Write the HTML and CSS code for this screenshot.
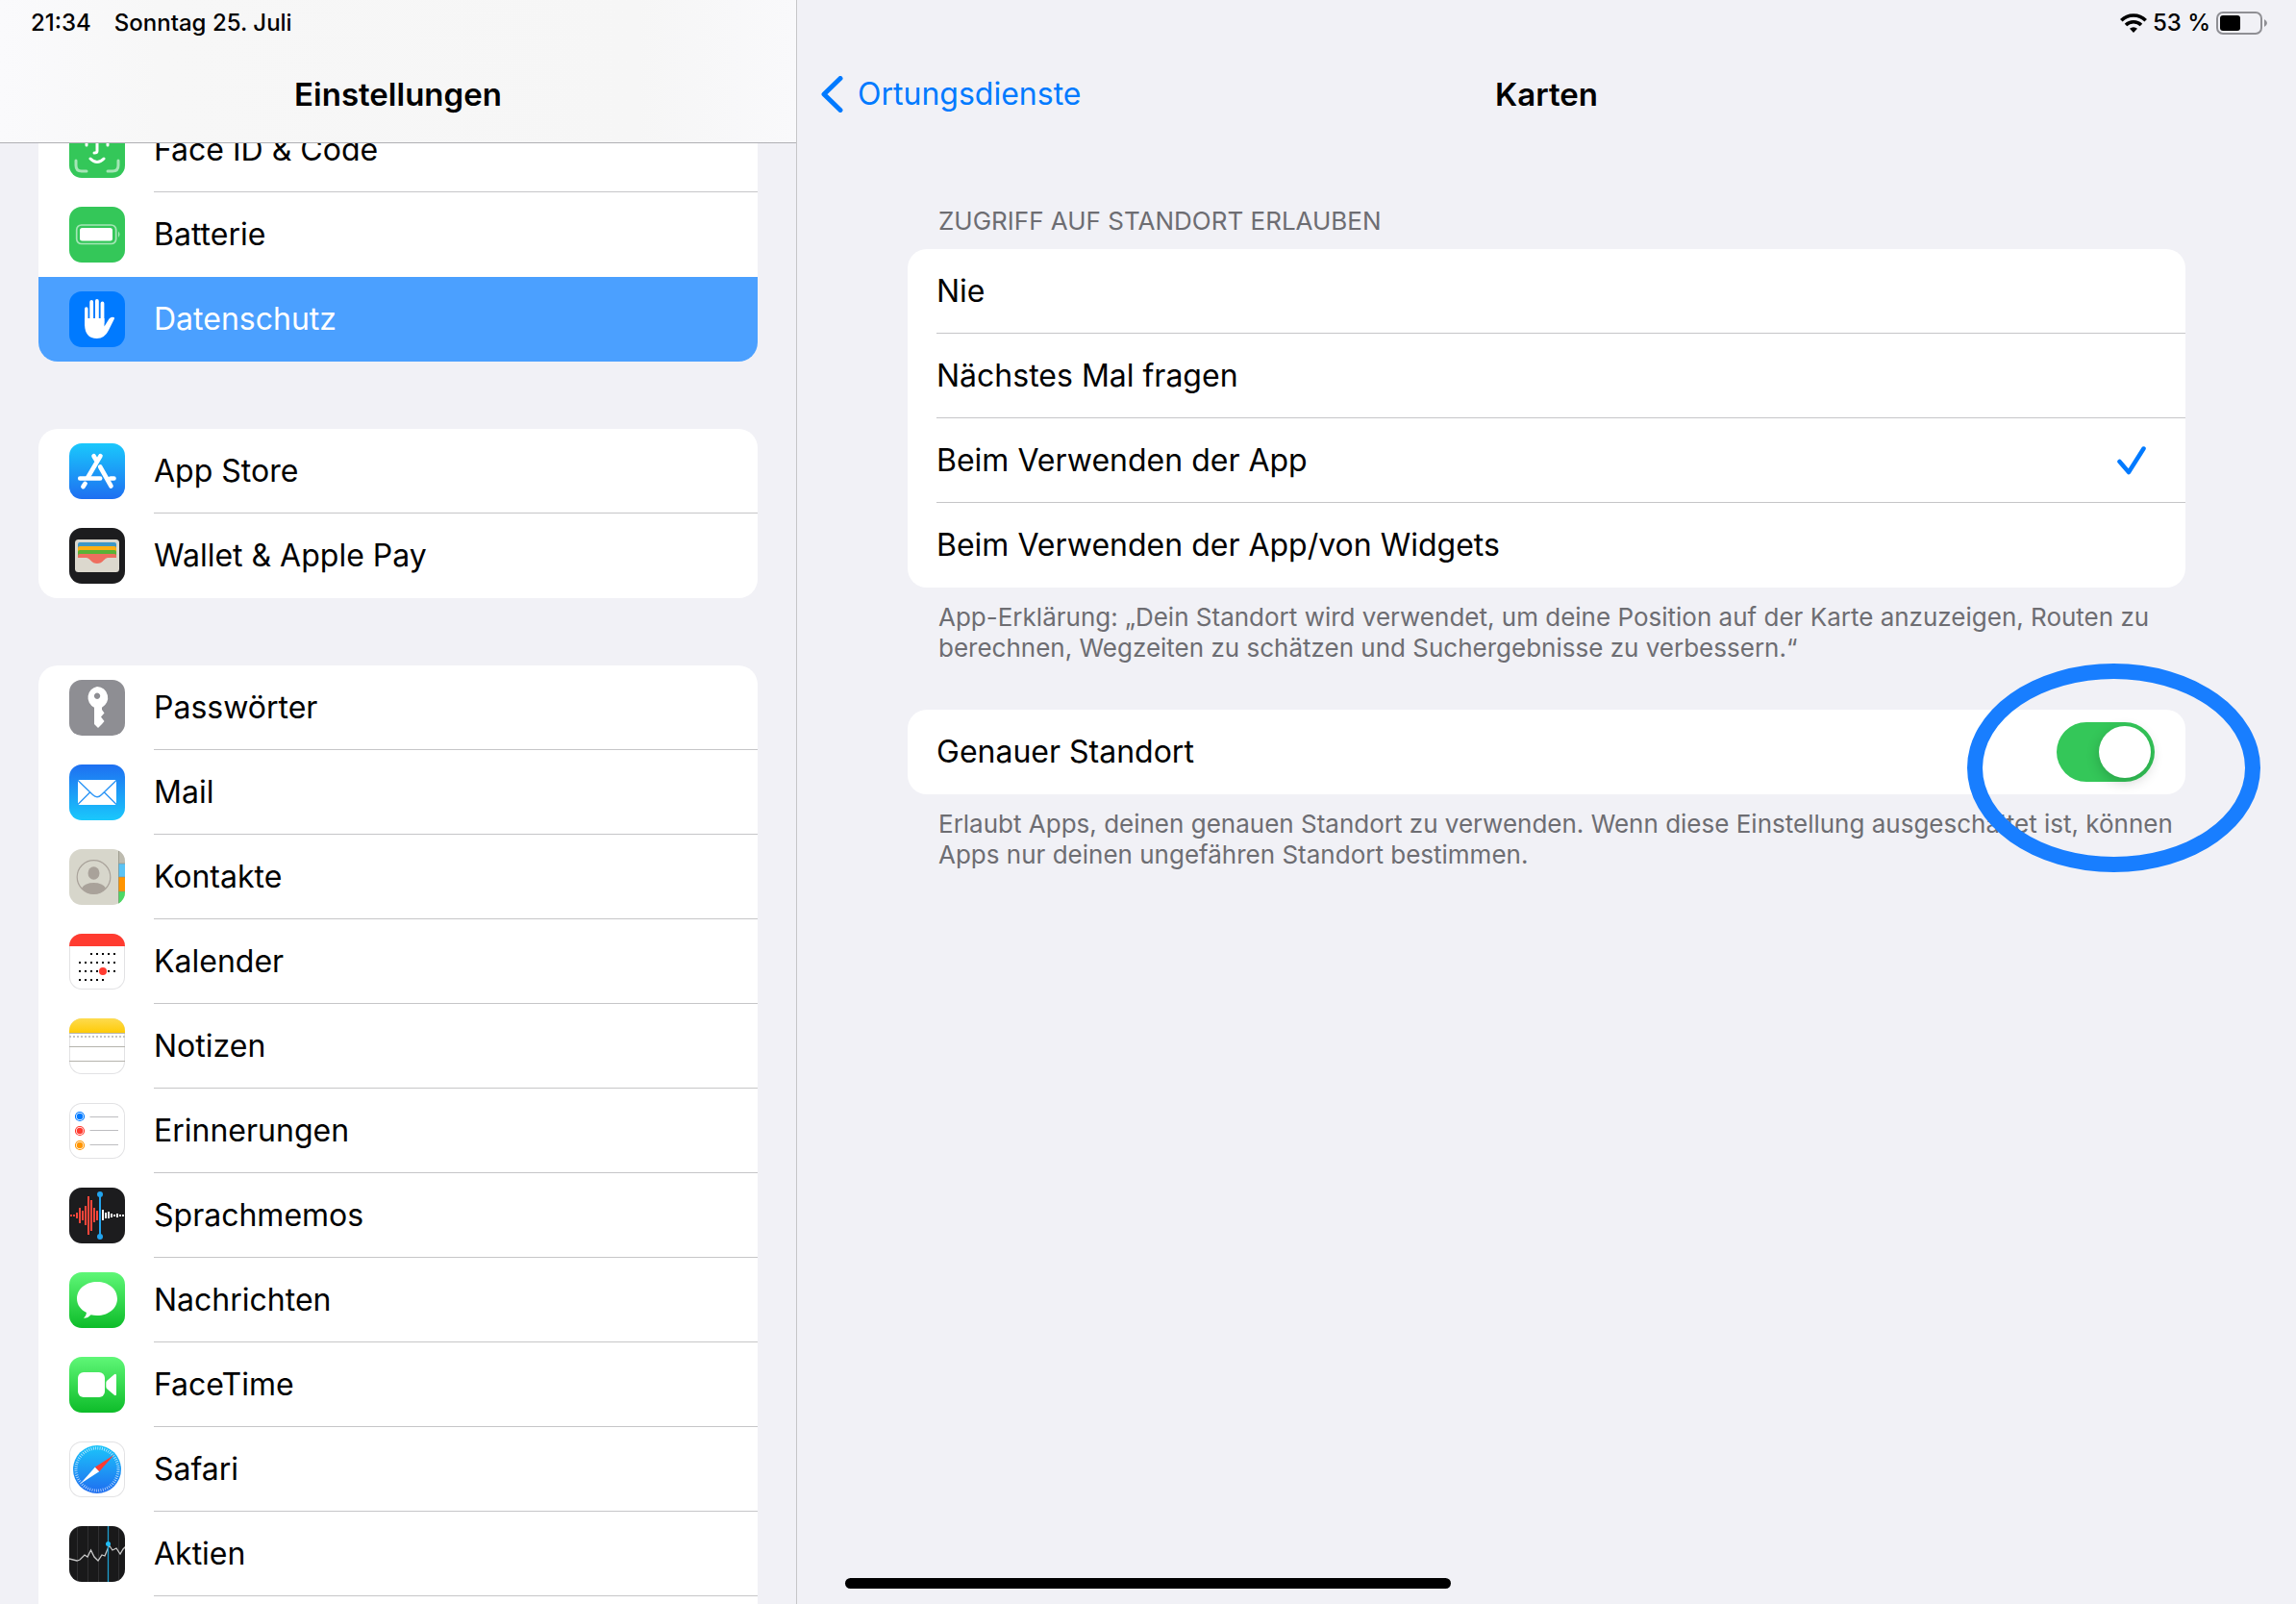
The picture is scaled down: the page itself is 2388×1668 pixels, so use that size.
FILE: index.html
```html
<!DOCTYPE html>
<html lang="de">
<head>
    <meta charset="UTF-8">
    <meta name="viewport" content="width=device-width, initial-scale=1">
    <title>Einstellungen</title>
    <link rel="stylesheet" href="styles.css">
</head>
<body>
    <div class="settings">
        <aside class="sidebar">
            <header class="sidebar-header">
                <div class="status">
                    <span>21:34</span>
                    <span>Sonntag 25. Juli</span>
                </div>
                <div class="navbar">
                    <h1 class="navbar-title">Einstellungen</h1>
                </div>
            </header>
            <nav class="menu">
                <ul class="menu-group menu-group-scrolled">
                    <li>
                        <a class="menu-item" href="#">
                            <svg class="icon" viewBox="0 0 58 58">
                                <rect width="58" height="58" fill="#34c759"/>
                                <g fill="none" stroke="#fff" stroke-width="3" stroke-linecap="round">
                                    <path d="M18 19v5M40 19v5M29 19v11q0 2-3 2M22 38q7 7 14 0"/>
                                    <path stroke="#a5e6b6" d="M7 40v5q0 6 6 6h5M51 40v5q0 6-6 6h-5M7 18v-5q0-6 6-6h5M51 18v-5q0-6-6-6h-5"/>
                                </g>
                            </svg>
                            <span class="menu-text">Face ID &amp; Code</span>
                        </a>
                    </li>
                    <li>
                        <a class="menu-item" href="#">
                            <svg class="icon" viewBox="0 0 58 58">
                                <rect width="58" height="58" fill="#34c759"/>
                                <rect x="7.700" y="19" width="41" height="19.500" rx="5" fill="none" stroke="#a5e6b6" stroke-width="1.700"/>
                                <rect x="11" y="22" width="34" height="13.500" rx="2.500" fill="#fff"/>
                                <path d="M51 25.500q3 3 0 6.500z" fill="#a5e6b6"/>
                            </svg>
                            <span class="menu-text">Batterie</span>
                        </a>
                    </li>
                    <li>
                        <a class="menu-item active" href="#">
                            <svg class="icon" viewBox="0 0 58 58">
                                <rect width="58" height="58" fill="#007aff"/>
                                <g fill="none" stroke="#fff" stroke-linecap="round">
                                    <path stroke-width="3.400" d="M17.800 18v17"/>
                                    <path stroke-width="3.800" d="M23.200 11v20M28.900 10v20M34.500 12.500v20"/>
                                </g>
                                <path fill="#fff" d="M16.100 28h20.400v8.500l5-8q2-2.500 5-1.500q1 .5.3 1.800l-6 12q-4 8.200-12 8.200q-12.700 0-12.700-15z"/>
                            </svg>
                            <span class="menu-text">Datenschutz</span>
                        </a>
                    </li>
                </ul>
                <ul class="menu-group">
                    <li>
                        <a class="menu-item" href="#">
                            <svg class="icon" viewBox="0 0 58 58">
                                <defs>
                                    <linearGradient id="store" x2="0" y2="1">
                                        <stop stop-color="#1ac8fc"/>
                                        <stop offset="1" stop-color="#1e6ff1"/>
                                    </linearGradient>
                                </defs>
                                <rect width="58" height="58" fill="url(#store)"/>
                                <g fill="none" stroke="#fff" stroke-width="4.600" stroke-linecap="round">
                                    <path d="M32.500 13.200L19.300 35.500M25.500 13.200l3 5M32.200 24.500L43.500 44.500M16.600 41.800l-2.200 3.300"/>
                                    <path d="M11.200 36.500h21M43 36.500h3.500"/>
                                </g>
                            </svg>
                            <span class="menu-text">App Store</span>
                        </a>
                    </li>
                    <li>
                        <a class="menu-item" href="#">
                            <svg class="icon" viewBox="0 0 58 58">
                                <rect width="58" height="58" fill="#1c1c1e"/>
                                <rect x="6" y="12" width="46" height="34" rx="3.500" fill="#dcd8ce"/>
                                <path fill="#3d97c6" d="M9 17q0-2 2-2h36q2 0 2 2v4H9z"/>
                                <path fill="#fdb012" d="M9 21q0-2 2-2h36q2 0 2 2v4H9z"/>
                                <path fill="#59b336" d="M9 25q0-2 2-2h36q2 0 2 2v4H9z"/>
                                <path fill="#ee6e5f" d="M9 29q0-2 2-2h36q2 0 2 2v2h-9q-2 0-4 2.500q-3 3.500-7 3.500t-7-3.500q-2-2.500-4-2.500H9z"/>
                            </svg>
                            <span class="menu-text">Wallet &amp; Apple Pay</span>
                        </a>
                    </li>
                </ul>
                <ul class="menu-group">
                    <li>
                        <a class="menu-item" href="#">
                            <svg class="icon" viewBox="0 0 58 58">
                                <rect width="58" height="58" fill="#8e8e93"/>
                                <path fill="#fff" fill-rule="evenodd" d="M29 7a11.500 11.500 0 0 1 5 21.700V31l2.500 3.500-3.500 4 3.500 4.500-2.500 3-4 4-4-4V28.700A11.500 11.500 0 0 1 29 7zm0 6.500a3.200 3.200 0 1 0 .1 0z"/>
                            </svg>
                            <span class="menu-text">Passwörter</span>
                        </a>
                    </li>
                    <li>
                        <a class="menu-item" href="#">
                            <svg class="icon" viewBox="0 0 58 58">
                                <defs>
                                    <linearGradient id="mail" x2="0" y2="1">
                                        <stop stop-color="#1e6ff1"/>
                                        <stop offset="1" stop-color="#1ac8fc"/>
                                    </linearGradient>
                                </defs>
                                <rect width="58" height="58" fill="url(#mail)"/>
                                <rect x="9" y="16" width="40" height="26" rx="1.500" fill="#fff"/>
                                <path fill="none" stroke="#2b95f6" stroke-width="1.400" d="M9 16.500l15.500 15q4.500 4.500 9 0L49 16.500M9 41.500L21.500 29M49 41.500L36.500 29"/>
                            </svg>
                            <span class="menu-text">Mail</span>
                        </a>
                    </li>
                    <li>
                        <a class="menu-item" href="#">
                            <svg class="icon" viewBox="0 0 58 58">
                                <rect width="58" height="58" fill="#d7d6cb"/>
                                <rect x="51" width="7" height="15" fill="#bdbbb0"/>
                                <rect x="51" y="15" width="7" height="14" fill="#5ac3f5"/>
                                <rect x="51" y="29" width="7" height="15" fill="#ff9500"/>
                                <rect x="51" y="44" width="7" height="14" fill="#4cd964"/>
                                <path stroke="#8b8a7e" d="M51.500 2v54M51 15h7M51 29h7M51 44h7" opacity=".6"/>
                                <circle cx="25.500" cy="29" r="17.300" fill="none" stroke="#a9a29a" stroke-width="1.200"/>
                                <ellipse cx="25.500" cy="25" rx="6" ry="6.700" fill="#a9a29a"/>
                                <path fill="#a9a29a" d="M13 40.500q3.500-5.500 12.500-5.500T38 40.500q-5 6-12.500 6T13 40.500z"/>
                            </svg>
                            <span class="menu-text">Kontakte</span>
                        </a>
                    </li>
                    <li>
                        <a class="menu-item" href="#">
                            <svg class="icon icon-light" viewBox="0 0 58 58">
                                <rect width="58" height="13" fill="#ff3b30"/>
                                <g stroke="#000" stroke-width="2" stroke-dasharray="2 4">
                                    <path d="M22 21h27M10 30h39M10 39h39M10 48h27"/>
                                </g>
                                <circle cx="35" cy="39" r="4" fill="#ff3b30"/>
                            </svg>
                            <span class="menu-text">Kalender</span>
                        </a>
                    </li>
                    <li>
                        <a class="menu-item" href="#">
                            <svg class="icon icon-light" viewBox="0 0 58 58">
                                <defs>
                                    <linearGradient id="notes" x2="0" y2="1">
                                        <stop stop-color="#fddb4f"/>
                                        <stop offset="1" stop-color="#ffcb07"/>
                                    </linearGradient>
                                </defs>
                                <rect width="58" height="15" fill="url(#notes)"/>
                                <path stroke="#b5b3ac" d="M0 15.500h58M0 29.500h58M0 44.500h58"/>
                                <path stroke="#c4c4c4" stroke-width="2" stroke-dasharray="2 2" d="M0 19h58"/>
                            </svg>
                            <span class="menu-text">Notizen</span>
                        </a>
                    </li>
                    <li>
                        <a class="menu-item" href="#">
                            <svg class="icon icon-light" viewBox="0 0 58 58">
                                <g fill="none" stroke-width="1.200">
                                    <circle cx="11" cy="14" r="4.500" stroke="#007aff"/>
                                    <circle cx="11" cy="29" r="4.500" stroke="#ff3b30"/>
                                    <circle cx="11" cy="44" r="4.500" stroke="#ff9500"/>
                                </g>
                                <circle cx="11" cy="14" r="3.200" fill="#007aff"/>
                                <circle cx="11" cy="29" r="3.200" fill="#ff3b30"/>
                                <circle cx="11" cy="44" r="3.200" fill="#ff9500"/>
                                <path stroke="#bdbdc0" d="M21.500 14.500H51M21.500 28.500H51M21.500 43.500H51"/>
                            </svg>
                            <span class="menu-text">Erinnerungen</span>
                        </a>
                    </li>
                    <li>
                        <a class="menu-item" href="#">
                            <svg class="icon" viewBox="0 0 58 58">
                                <rect width="58" height="58" fill="#1c1c1e"/>
                                <path stroke="#fe453a" stroke-width="2" d="M2 28v2M5 28v2M8 26v6M11 21v16M14 24v10M17 19v20M20 9v40M23 13v32M26 21v15M29 24v10"/>
                                <path stroke="#fff" stroke-width="2" d="M35 23v11M38 26v6M41 25v7M44 27v4M47 28v2M50 27v4M53 28v2M56 28v2"/>
                                <path stroke="#22a4ee" stroke-width="2" d="M32 7v44"/>
                                <circle cx="32" cy="7" r="3" fill="#22a4ee"/>
                                <circle cx="32" cy="51" r="3" fill="#22a4ee"/>
                            </svg>
                            <span class="menu-text">Sprachmemos</span>
                        </a>
                    </li>
                    <li>
                        <a class="menu-item" href="#">
                            <svg class="icon" viewBox="0 0 58 58">
                                <defs>
                                    <linearGradient id="green" x2="0" y2="1">
                                        <stop stop-color="#5ff777"/>
                                        <stop offset="1" stop-color="#0dbc29"/>
                                    </linearGradient>
                                </defs>
                                <rect width="58" height="58" fill="url(#green)"/>
                                <path fill="#fff" d="M29 10c12 0 21 7.500 21 17.500S41 45 29 45q-3.500 0-6.500-.8-3 3.500-7.500 3.600 2.800-2.300 3-5.800C12 39 8 34 8 27.500 8 17.500 17 10 29 10z"/>
                            </svg>
                            <span class="menu-text">Nachrichten</span>
                        </a>
                    </li>
                    <li>
                        <a class="menu-item" href="#">
                            <svg class="icon" viewBox="0 0 58 58">
                                <rect width="58" height="58" fill="url(#green)"/>
                                <rect x="9" y="16" width="28" height="26" rx="6" fill="#fff"/>
                                <path fill="#fff" d="M38.300 27q0-1.500 1-2.300l7-6q2.700-2 2.700.8v19q0 2.800-2.700.8l-7-6q-1-.8-1-2.300z"/>
                            </svg>
                            <span class="menu-text">FaceTime</span>
                        </a>
                    </li>
                    <li>
                        <a class="menu-item" href="#">
                            <svg class="icon icon-light" viewBox="0 0 58 58">
                                <defs>
                                    <linearGradient id="safari" x2="0" y2="1">
                                        <stop stop-color="#1cc5fa"/>
                                        <stop offset="1" stop-color="#1f6df0"/>
                                    </linearGradient>
                                </defs>
                                <circle cx="29" cy="29" r="25" fill="url(#safari)"/>
                                <circle cx="29" cy="29" r="22" fill="none" stroke="#fff" stroke-width="3" stroke-dasharray=".7 1.600" opacity=".8"/>
                                <path fill="#ff3b30" d="M46.500 14L26.800 26.800l4.400 4.400z"/>
                                <path fill="#fff" d="M11.500 44l15.300-17.200 4.400 4.400z"/>
                            </svg>
                            <span class="menu-text">Safari</span>
                        </a>
                    </li>
                    <li>
                        <a class="menu-item" href="#">
                            <svg class="icon" viewBox="0 0 58 58">
                                <rect width="58" height="58" fill="#19191a"/>
                                <path stroke="#303032" d="M8.500 0v58M19.500 0v58M30.500 0v58M51.500 0v58"/>
                                <path fill="none" stroke="#c8c8c8" stroke-width="1.300" d="M0 34l8 2 3-1 5-5 3 2 3.500-7 3.500 7 4 4 4-6 3 1 4.500-11 3.500 5 4-2 4 6 3-5 3-3"/>
                                <path stroke="#1f9fd0" stroke-width="1.300" d="M40.500 0v58"/>
                                <circle cx="40.500" cy="18.500" r="2.500" fill="#1fbdf5"/>
                            </svg>
                            <span class="menu-text">Aktien</span>
                        </a>
                    </li>
                    <li>
                        <a class="menu-item" href="#"></a>
                    </li>
                </ul>
            </nav>
        </aside>
        <main class="detail">
            <div class="status status-right">
                <svg class="wifi" viewBox="0 0 28 20">
                    <g fill="none" stroke="#000" stroke-width="3.600">
                        <path d="M1.300 7.200a18 18 0 0 1 25.400 0"/>
                        <path d="M6 12a11.500 11.500 0 0 1 16 0"/>
                    </g>
                    <path d="M14 20l-4-4.200a5.800 5.800 0 0 1 8 0z"/>
                </svg>
                <span>53 %</span>
                <svg class="battery" viewBox="0 0 54 24">
                    <rect x="1" y="1" width="46" height="22" rx="6" fill="none" stroke="#8f8f94" stroke-width="2"/>
                    <rect x="4" y="4" width="21" height="16" rx="3" fill="#000"/>
                    <path d="M50 8q6 4 0 8z" fill="#8f8f94"/>
                </svg>
            </div>
            <div class="navbar">
                <a class="back" href="#">
                    <svg class="back-arrow" viewBox="0 0 24 38">
                        <path d="M21 2.500L4 19l17 16.500" fill="none" stroke="#007aff" stroke-width="5" stroke-linecap="round" stroke-linejoin="round"/>
                    </svg>
                    Ortungsdienste
                </a>
                <h2 class="navbar-title">Karten</h2>
            </div>
            <form class="content">
                <fieldset class="section">
                    <legend class="section-title">ZUGRIFF AUF STANDORT ERLAUBEN</legend>
                    <div class="card">
                        <label class="option">
                            <span>Nie</span>
                            <input class="option-input" type="radio" name="access">
                            <svg class="check" viewBox="0 0 30 30"><path d="M2.500 16L12 27 27.500 2.500"/></svg>
                        </label>
                        <label class="option">
                            <span>Nächstes Mal fragen</span>
                            <input class="option-input" type="radio" name="access">
                            <svg class="check" viewBox="0 0 30 30"><path d="M2.500 16L12 27 27.500 2.500"/></svg>
                        </label>
                        <label class="option">
                            <span>Beim Verwenden der App</span>
                            <input class="option-input" type="radio" name="access" checked>
                            <svg class="check" viewBox="0 0 30 30"><path d="M2.500 16L12 27 27.500 2.500"/></svg>
                        </label>
                        <label class="option">
                            <span>Beim Verwenden der App/von Widgets</span>
                            <input class="option-input" type="radio" name="access">
                            <svg class="check" viewBox="0 0 30 30"><path d="M2.500 16L12 27 27.500 2.500"/></svg>
                        </label>
                    </div>
                    <p class="note">App-Erklärung: „Dein Standort wird verwendet, um deine Position auf der Karte anzuzeigen, Routen zu berechnen, Wegzeiten zu schätzen und Suchergebnisse zu verbessern.“</p>
                </fieldset>
                <div class="section">
                    <div class="card card-marked">
                        <label class="option" for="precise">
                            <span>Genauer Standort</span>
                            <input class="switch" id="precise" type="checkbox" checked>
                        </label>
                        <div class="marker"></div>
                    </div>
                    <p class="note">Erlaubt Apps, deinen genauen Standort zu verwenden. Wenn diese Einstellung ausgeschaltet ist, können Apps nur deinen ungefähren Standort bestimmen.</p>
                </div>
            </form>
        </main>
        <div class="home-bar"></div>
    </div>
</body>
</html>
```
FILE: styles.css
```css
*{
    margin: 0;
    padding: 0;
    box-sizing: border-box;
}
body{
    font-family: Inter, "Liberation Sans", sans-serif;
    font-size: 32px;
    line-height: 44px;
    color: #000000;
    background-color: #f1f1f6;
}
ul{
    list-style: none;
}
a{
    color: inherit;
    text-decoration: none;
}
.settings{
    position: relative;
    display: flex;
    height: 100vh;
    overflow: hidden;
}
/* left column */
.sidebar{
    display: flex;
    flex-direction: column;
    width: 829px;
    flex-shrink: 0;
    border-right: 1px solid #c6c6c8;
}
.sidebar-header{
    position: relative;
    flex-shrink: 0;
    border-bottom: 1px solid #b0b0b4;
    background: linear-gradient(90deg, #fafafc, #f7f7f7 20%, #f6f6f6 80%, #f9f9fb);
}
.status{
    display: flex;
    align-items: center;
    gap: 24px;
    height: 48px;
    padding: 0 32px;
    font-size: 24px;
    font-weight: 500;
    line-height: 32px;
}
.navbar{
    position: relative;
    display: flex;
    align-items: center;
    justify-content: center;
    height: 100px;
}
.navbar-title{
    font-size: 33px;
    font-weight: 600;
}
.menu{
    flex: 1;
    min-height: 0;
    overflow: hidden;
    padding: 0 40px;
}
.menu-group{
    margin-bottom: 70px;
    border-radius: 20px;
    background-color: #ffffff;
    overflow: hidden;
}
/* the list is scrolled a little under the header */
.menu-group-scrolled{
    margin-top: -37px;
}
.menu-item{
    display: grid;
    grid-template-columns: 58px 1fr;
    column-gap: 30px;
    align-items: center;
    height: 88px;
    padding-left: 32px;
}
.menu-text{
    display: flex;
    align-items: center;
    height: 88px;
    border-bottom: 1px solid #c6c6c8;
}
.menu-group li:last-child .menu-text,
.menu-group-scrolled li:nth-child(2) .menu-text{
    border-bottom-color: transparent;
}
.active{
    color: #ffffff;
    background-color: #4ba0ff;
}
.icon{
    width: 58px;
    height: 58px;
    border-radius: 13px;
}
.icon-light{
    box-shadow: inset 0 0 0 1px #e2e2e4;
}
/* right column */
.detail{
    flex: 1;
    min-width: 0;
}
.status-right{
    justify-content: flex-end;
    gap: 6px;
    padding-right: 29px;
}
.wifi{
    width: 28px;
    height: 20px;
}
.battery{
    width: 54px;
    height: 24px;
}
.back{
    position: absolute;
    left: 24px;
    display: flex;
    align-items: center;
    gap: 15px;
    color: #007aff;
}
.back-arrow{
    width: 24px;
    height: 38px;
}
.content{
    padding: 66px 115px 0;
}
.section{
    border: 0;
    margin-bottom: 48px;
}
.section-title{
    padding: 0 32px 13px;
    font-size: 26px;
    line-height: 32px;
    color: #6d6d72;
}
.card{
    border-radius: 20px;
    background-color: #ffffff;
}
.card-marked{
    position: relative;
}
.option{
    display: flex;
    align-items: center;
    justify-content: space-between;
    height: 88px;
    margin-left: 30px;
    padding-right: 32px;
    border-bottom: 1px solid #c6c6c8;
}
.option:last-of-type{
    border-bottom-color: transparent;
}
.option-input{
    appearance: none;
}
.check{
    display: none;
    width: 30px;
    height: 30px;
    margin-right: 9px;
    fill: none;
    stroke: #007aff;
    stroke-width: 4.5;
    stroke-linecap: round;
    stroke-linejoin: round;
}
.option-input:checked + .check{
    display: block;
}
.switch{
    appearance: none;
    display: flex;
    justify-content: flex-end;
    width: 102px;
    height: 62px;
    padding: 4px;
    border-radius: 31px;
    background-color: #d1d1d6;
}
.switch::before{
    content: "";
    width: 54px;
    height: 54px;
    border-radius: 50%;
    background-color: #ffffff;
    box-shadow: 0 4px 14px rgba(0, 0, 0, 0.2);
}
.switch:checked{
    background-color: #34c759;
}
.switch:not(:checked){
    justify-content: flex-start;
}
.note{
    padding: 15px 0 0 32px;
    font-size: 26px;
    line-height: 32px;
    color: #6d6d72;
}
/* ring drawn round the switch */
.marker{
    position: absolute;
    top: -48px;
    right: -78px;
    width: 305px;
    height: 217px;
    border: 16px solid #187eff;
    border-radius: 50%;
    pointer-events: none;
}
.home-bar{
    position: absolute;
    bottom: 16px;
    left: 50%;
    width: 630px;
    height: 11px;
    margin-left: -315px;
    border-radius: 6px;
    background-color: #000000;
}
```
